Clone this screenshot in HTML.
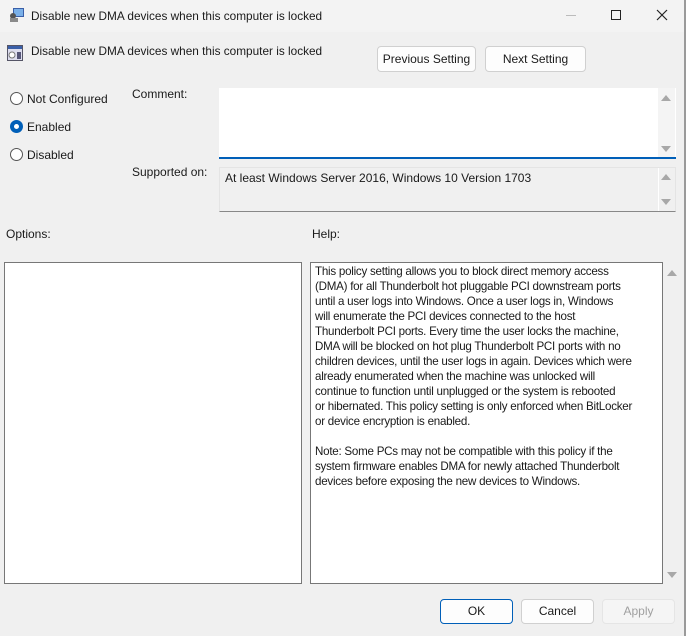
<!DOCTYPE html>
<html><head><meta charset="utf-8"><style>
*{box-sizing:border-box;margin:0;padding:0}
body{width:686px;height:636px;background:#f0f0f0;font-family:"Liberation Sans",sans-serif;font-size:12px;color:#1a1a1a;position:relative;overflow:hidden}
.a{position:absolute}
.btn{position:absolute;background:#fdfdfd;border:1px solid #d0d0d0;border-radius:4px;text-align:center;font-size:12px}
.radio{position:absolute;width:13px;height:13px;border:1px solid #555;border-radius:50%;background:#fff}
.help div{height:15px;white-space:pre;letter-spacing:-0.25px}
.tri{position:absolute;width:0;height:0;border-left:5px solid transparent;border-right:5px solid transparent}
.up{border-bottom:6px solid #a8a8a8}
.dn{border-top:6px solid #a8a8a8}
</style></head><body>
<div class="a" style="left:0;top:0;width:686px;height:32px;background:#f3f3f3"></div>
<div class="a" style="right:0;top:0;width:2px;height:636px;background:#9a9a9a"></div>
<svg class="a" style="left:9px;top:7px" width="16" height="16"><rect x="4" y="1" width="11" height="9" fill="#3a5fa8"/><rect x="5" y="2" width="9" height="7" fill="#7ab0e8"/><circle cx="4" cy="9" r="3" fill="#555"/><rect x="1" y="11" width="8" height="4" fill="#8a8a8a"/></svg>
<div class="a" style="left:31px;top:9px;font-size:11.8px">Disable new DMA devices when this computer is locked</div>
<div class="a" style="left:566px;top:15px;width:10px;height:1px;background:#bbb"></div>
<div class="a" style="left:611px;top:10px;width:10px;height:10px;border:1px solid #222"></div>
<svg class="a" style="left:656px;top:9px" width="12" height="12"><path d="M1 1L11 11M11 1L1 11" stroke="#222" stroke-width="1.2"/></svg>
<svg class="a" style="left:7px;top:45px" width="16" height="16"><rect x="0.5" y="0.5" width="15" height="15" fill="#dde" stroke="#556"/><rect x="1" y="1" width="14" height="3" fill="#3a5fa8"/><circle cx="5" cy="10" r="3" fill="#fff" stroke="#777"/><rect x="10" y="7" width="4" height="7" fill="#557"/></svg>
<div class="a" style="left:31px;top:44px;font-size:11.8px">Disable new DMA devices when this computer is locked</div>
<div class="btn" style="left:377px;top:46px;width:99px;height:26px;line-height:24px">Previous Setting</div>
<div class="btn" style="left:485px;top:46px;width:101px;height:26px;line-height:24px">Next Setting</div>
<div class="radio" style="left:10px;top:92px"></div><div class="a" style="left:27px;top:92px">Not Configured</div>
<div class="radio" style="left:10px;top:120px;background:#fff;border:4px solid #005fb8"></div><div class="a" style="left:27px;top:120px">Enabled</div>
<div class="radio" style="left:10px;top:148px"></div><div class="a" style="left:27px;top:148px">Disabled</div>
<div class="a" style="left:132px;top:87px">Comment:</div>
<div class="a" style="left:132px;top:165px">Supported on:</div>
<div class="a" style="left:219px;top:88px;width:457px;height:71px;background:#fff;border-bottom:2px solid #005fb8"></div>
<div class="a" style="left:658px;top:88px;width:17px;height:69px;background:#f4f4f4"></div>
<div class="tri up" style="left:661px;top:95px"></div><div class="tri dn" style="left:661px;top:146px"></div>
<div class="a" style="left:219px;top:167px;width:457px;height:45px;background:#f0f0f0;border:1px solid #e4e4e4;border-bottom:1px solid #888"></div>
<div class="a" style="left:658px;top:168px;width:1px;height:43px;background:#fff"></div>
<div class="a" style="left:225px;top:171px">At least Windows Server 2016, Windows 10 Version 1703</div>
<div class="tri up" style="left:661px;top:174px"></div><div class="tri dn" style="left:661px;top:199px"></div>
<div class="a" style="left:6px;top:227px">Options:</div>
<div class="a" style="left:312px;top:227px">Help:</div>
<div class="a" style="left:4px;top:262px;width:298px;height:322px;background:#fff;border:1px solid #777"></div>
<div class="a" style="left:310px;top:262px;width:353px;height:322px;background:#fff;border:1px solid #777"></div>
<div class="tri up" style="left:667px;top:270px"></div><div class="tri dn" style="left:667px;top:572px"></div>
<div class="a help" style="left:315px;top:265px;font-size:11.6px">
<div>This policy setting allows you to block direct memory access</div>
<div>(DMA) for all Thunderbolt hot pluggable PCI downstream ports</div>
<div>until a user logs into Windows. Once a user logs in, Windows</div>
<div>will enumerate the PCI devices connected to the host</div>
<div>Thunderbolt PCI ports. Every time the user locks the machine,</div>
<div>DMA will be blocked on hot plug Thunderbolt PCI ports with no</div>
<div>children devices, until the user logs in again. Devices which were</div>
<div>already enumerated when the machine was unlocked will</div>
<div>continue to function until unplugged or the system is rebooted</div>
<div>or hibernated. This policy setting is only enforced when BitLocker</div>
<div>or device encryption is enabled.</div>
<div> </div>
<div>Note: Some PCs may not be compatible with this policy if the</div>
<div>system firmware enables DMA for newly attached Thunderbolt</div>
<div>devices before exposing the new devices to Windows.</div>
</div>
<div class="btn" style="left:440px;top:599px;width:73px;height:25px;line-height:23px;border:1px solid #005fb8">OK</div>
<div class="btn" style="left:521px;top:599px;width:73px;height:25px;line-height:23px">Cancel</div>
<div class="btn" style="left:602px;top:599px;width:73px;height:25px;line-height:23px;background:#f5f5f5;border-color:#e5e5e5;color:#a0a0a0">Apply</div>
</body></html>
